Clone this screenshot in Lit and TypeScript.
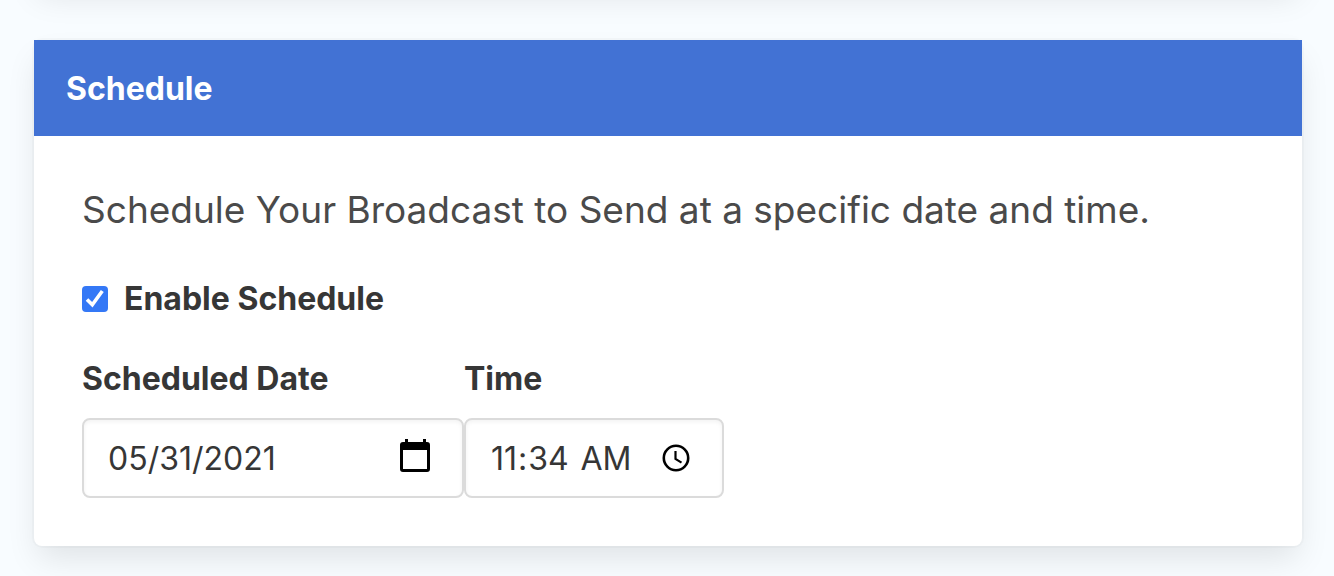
import { LitElement, html, css } from "lit";
import { customElement } from "lit/decorators.js";

@customElement("app-root")
export class AppRoot extends LitElement {
  static styles = css`
    :host {
      display: block;
      box-sizing: border-box;
      min-height: 100vh;
      overflow: hidden;
      padding: 0 32px 30px 34px;
      background: #f8fcff;
      color: #4a4a4a;
      font-family: Inter, "Liberation Sans", sans-serif;
      font-size: 32px;
      line-height: 48px;
    }
    .card {
      background: #fff;
      border-radius: 8px;
      box-shadow: 0 16px 32px -4px rgba(10, 10, 10, 0.1), 0 0 0 2px rgba(10, 10, 10, 0.02);
    }
    .previous {
      height: 96px;
      margin: -112px 0 56px;
    }
    .head {
      margin: 0;
      padding: 25px 32px 23px;
      background: #4272d4;
      color: #fff;
      font-size: 32px;
      font-weight: 650;
    }
    .body { padding: 48px; }
    .intro { margin: 0; font-size: 37px; line-height: 52px; }
    .enable {
      display: flex;
      align-items: center;
      gap: 16px;
      margin: 39px 0 32px;
    }
    label { color: #363636; font-weight: 650; }
    .check {
      appearance: none;
      width: 26px;
      height: 26px;
      margin: 0;
      border-radius: 4px;
      background: #3478f6;
    }
    .tick { display: grid; }
    .tick > * { grid-area: 1 / 1; }
    .tick svg { pointer-events: none; }
    .fields { display: flex; }
    .field { display: flex; flex-direction: column; gap: 15px; }
    .control {
      box-sizing: border-box;
      height: 80px;
      padding: 2px 24px 0;
      border: 2px solid #dbdbdb;
      border-radius: 8px;
      outline: 0;
      background: #fff;
      box-shadow: inset 0 2px 4px rgba(10, 10, 10, 0.05);
      color: #363636;
      font: inherit;
    }
    .date { width: 382px; }
    .time { width: 260px; }
    .control::-webkit-datetime-edit-month-field,
    .control::-webkit-datetime-edit-day-field,
    .control::-webkit-datetime-edit-year-field {
      padding: 0;
    }
    .control::-webkit-datetime-edit-ampm-field {
      padding: 0 0 0 5px;
    }
    .control::-webkit-calendar-picker-indicator {
      box-sizing: border-box;
      width: 40px;
      height: 40px;
      margin: 0;
      padding: 0;
      background-position: center;
      background-repeat: no-repeat;
      background-size: 40px 40px;
    }
    .date::-webkit-calendar-picker-indicator {
      background-image: url("data:image/svg+xml,%3Csvg xmlns='http://www.w3.org/2000/svg' viewBox='0 0 40 40'%3E%3Cpath fill='black' fill-rule='evenodd' d='M29 3h-1V0h-3v3H10V0H7v3H5Q2 3 2 6v24q0 3 3 3h24q3 0 3-3V6q0-3-3-3zM5 11h24v19H5z'/%3E%3C/svg%3E");
    }
    .time::-webkit-calendar-picker-indicator {
      background-image: url("data:image/svg+xml,%3Csvg xmlns='http://www.w3.org/2000/svg' viewBox='0 0 40 40'%3E%3Cg fill='none' stroke='black' stroke-width='2.600'%3E%3Ccircle cx='18' cy='19' r='12.200'/%3E%3Cpath stroke-width='2.200' d='M17.500 12v8l6 3.600'/%3E%3C/g%3E%3C/svg%3E");
    }
  `;

  render() {
    return html`
      <div class="card previous"></div>
      <section class="card">
        <h2 class="head">Schedule</h2>
        <form class="body">
          <p class="intro">Schedule Your Broadcast to Send at a specific date and time.</p>
          <div class="enable">
            <span class="tick">
              <input class="check" id="enable" type="checkbox" checked />
              <svg width="26" height="26" viewBox="0 0 26 26" fill="none" stroke="#fff" stroke-width="3.6"><path d="M5 13.500l5.300 5.200L20.300 5" /></svg>
            </span>
            <label for="enable">Enable Schedule</label>
          </div>
          <div class="fields">
            <div class="field">
              <label for="date">Scheduled Date</label>
              <input class="control date" id="date" type="date" value="2021-05-31" />
            </div>
            <div class="field">
              <label for="time">Time</label>
              <input class="control time" id="time" type="time" value="11:34" />
            </div>
          </div>
        </form>
      </section>
    `;
  }
}
